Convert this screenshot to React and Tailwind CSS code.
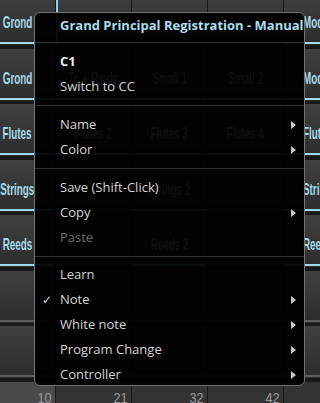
import { Fragment } from 'react'

// background pad grid, partly hidden behind the context menu
const rows = [
  ['Grond', '', '', '', 'Mod'],
  ['Grond', 'Tr. + Rmds', 'Small 1', 'Small 2', 'Mod'],
  ['Flutes', 'Flutes 2', 'Flutes 3', 'Flutes 4', 'Flutes'],
  ['Strings', '', 'Strings 2', '', 'Strings'],
  ['Reeds', '', 'Reeds 2', '', 'Reeds'],
  ['', '', '', '', ''],
  ['', '', '', '', ''],
]
const numbers = ['10', '21', '32', '42', '']

function Pad({ label, selected, edge }) {
  return (
    <div
      className={`h-[52px] flex flex-col bg-gradient-to-b from-[#404040] to-[#2c2c2c] ${
        selected ? 'border-l-2 border-[#8fd3ea]' : ''
      }`}
    >
      <div
        className={`flex-1 flex items-center pt-[10px] ${edge ? 'justify-start pl-[19px]' : 'justify-center'}`}
      >
        {label && (
          <span
            className={`inline-block scale-x-[0.58] whitespace-nowrap font-['Liberation_Sans',sans-serif] font-bold text-[17px] leading-none text-[#a6dcec] ${
              edge ? 'origin-left' : ''
            }`}
          >
            {label}
          </span>
        )}
      </div>
      <div className={`h-[2px] mb-px ${label ? 'bg-[#9fd8ec]' : 'bg-[#5c5c5c]'}`} />
    </div>
  )
}

function Arrow() {
  return (
    <svg width="5" height="8" viewBox="0 0 5 8" className="ml-auto">
      <polygon points="0,0 5,4 0,8" fill="#c8c8c8" />
    </svg>
  )
}

function Item({ label, arrow, checked, bold, disabled }) {
  return (
    <div className="relative h-[25px] flex items-center pl-[25px] pr-[8px] whitespace-nowrap">
      {checked && (
        <span className="absolute left-[7px] font-['DejaVu_Sans',sans-serif] text-[12px] text-[#d8d8d8]">✓</span>
      )}
      <span
        className={
          disabled ? 'text-[#6c6c6c]' : bold ? 'font-bold text-[#ececec]' : 'text-[#d4d4d4]'
        }
      >
        {label}
      </span>
      {arrow && <Arrow />}
    </div>
  )
}

function Sep() {
  return <div className="h-px bg-[#303030]" />
}

export default function App() {
  return (
    <div className="relative w-[320px] h-[403px] overflow-hidden bg-[#181818]">
      {/* Pads */}
      <div className="grid grid-cols-[repeat(5,75px)] gap-x-px gap-y-[3.5px] -ml-[20px] -mt-[7px]">
        {rows.map((row, r) => (
          <Fragment key={r}>
            {row.map((label, c) => (
              <Pad key={c} label={label} selected={r === 0 && c === 1} edge={c === 4} />
            ))}
          </Fragment>
        ))}
        {numbers.map((n, c) => (
          <div
            key={c}
            className={`h-[24px] flex justify-end pr-[3px] pt-[8px] ${c === 0 ? 'bg-[#4a4a4a]' : 'bg-[#333333]'}`}
          >
            <span className="inline-block origin-right scale-x-[0.85] font-['Liberation_Sans',sans-serif] text-[15px] leading-none text-[#9a9a9a]">
              {n}
            </span>
          </div>
        ))}
      </div>

      {/* Context menu */}
      <div className="absolute left-[34px] top-[12px] w-[271px] h-[374px] overflow-hidden rounded-[6px] border border-[#747474] bg-black/[0.94] font-['Open_Sans',sans-serif] text-[13px]">
        <div className="h-[29px] pt-[3px] pl-[25px] leading-[18px] font-bold text-[#aadef0] whitespace-nowrap">
          Grand Principal Registration - Manual
        </div>
        <Sep />
        <div className="py-[6px]">
          <Item label="C1" bold />
          <Item label="Switch to CC" />
        </div>
        <Sep />
        <div className="py-[6px]">
          <Item label="Name" arrow />
          <Item label="Color" arrow />
        </div>
        <Sep />
        <div className="py-[6px]">
          <Item label="Save (Shift-Click)" />
          <Item label="Copy" arrow />
          <Item label="Paste" disabled />
        </div>
        <Sep />
        <div className="pt-[5px]">
          <Item label="Learn" />
          <Item label="Note" arrow checked />
          <Item label="White note" arrow />
          <Item label="Program Change" arrow />
          <Item label="Controller" arrow />
        </div>
      </div>
    </div>
  )
}
